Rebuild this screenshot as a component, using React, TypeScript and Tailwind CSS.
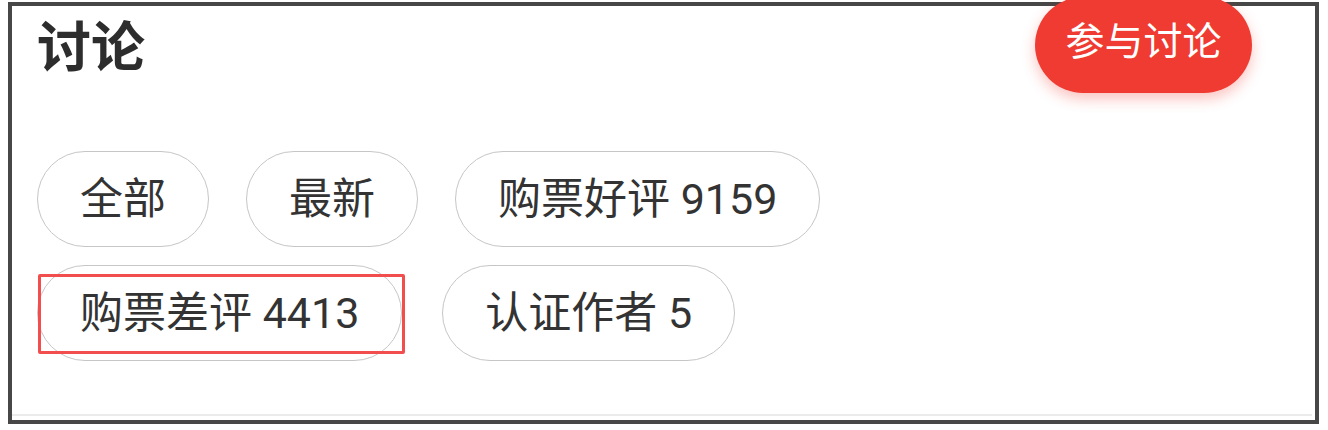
import React from 'react';

const ROWS = [
  { gap: 'gap-[37px]', items: ['全部', '最新', '购票好评 9159'] },
  { gap: 'gap-[40px]', items: ['购票差评 4413', '认证作者 5'] },
];

const Chip: React.FC<{ label: string }> = ({ label }) => (
  <div className="h-[96px] flex items-center px-[42px] rounded-full border-[1.5px] border-[#c6c6c6] text-[43px] leading-none text-[#333]">
    {label}
  </div>
);

export default function App() {
  return (
    <div
      className="w-[1328px] h-[430px] bg-white pl-[8px] pt-[2px] overflow-hidden"
      style={{ fontFamily: 'Roboto, "Noto Sans CJK SC", sans-serif' }}
    >
      <div className="relative w-[1311px] h-[422px] border-4 border-[#474747] bg-white">
        <div className="h-[410px] mr-[3px] border-b-2 border-[#ebebeb] pl-[25px] pt-[16px]">
          <h1 className="text-[54px] leading-none font-bold text-[#2d2d2d]">讨论</h1>

          <div className="mt-[75px] flex flex-col gap-[18px]">
            {ROWS.map((row, i) => (
              <div key={i} className={`flex ${row.gap}`}>
                {row.items.map((label) => (
                  <Chip key={label} label={label} />
                ))}
              </div>
            ))}
          </div>
        </div>

        {/* join button sits over the frame edge */}
        <button className="absolute left-[1023px] top-[-9px] w-[217px] h-[96px] pb-[6px] rounded-full bg-[#ef3b31] text-white text-[39px] leading-none shadow-[0_6px_14px_rgba(239,59,49,0.3)]">
          参与讨论
        </button>

        {/* highlight annotation */}
        <div className="absolute left-[26px] top-[268px] w-[367px] h-[80px] border-[3px] border-[#f24e4e] rounded-[2px]" />
      </div>
    </div>
  );
}
